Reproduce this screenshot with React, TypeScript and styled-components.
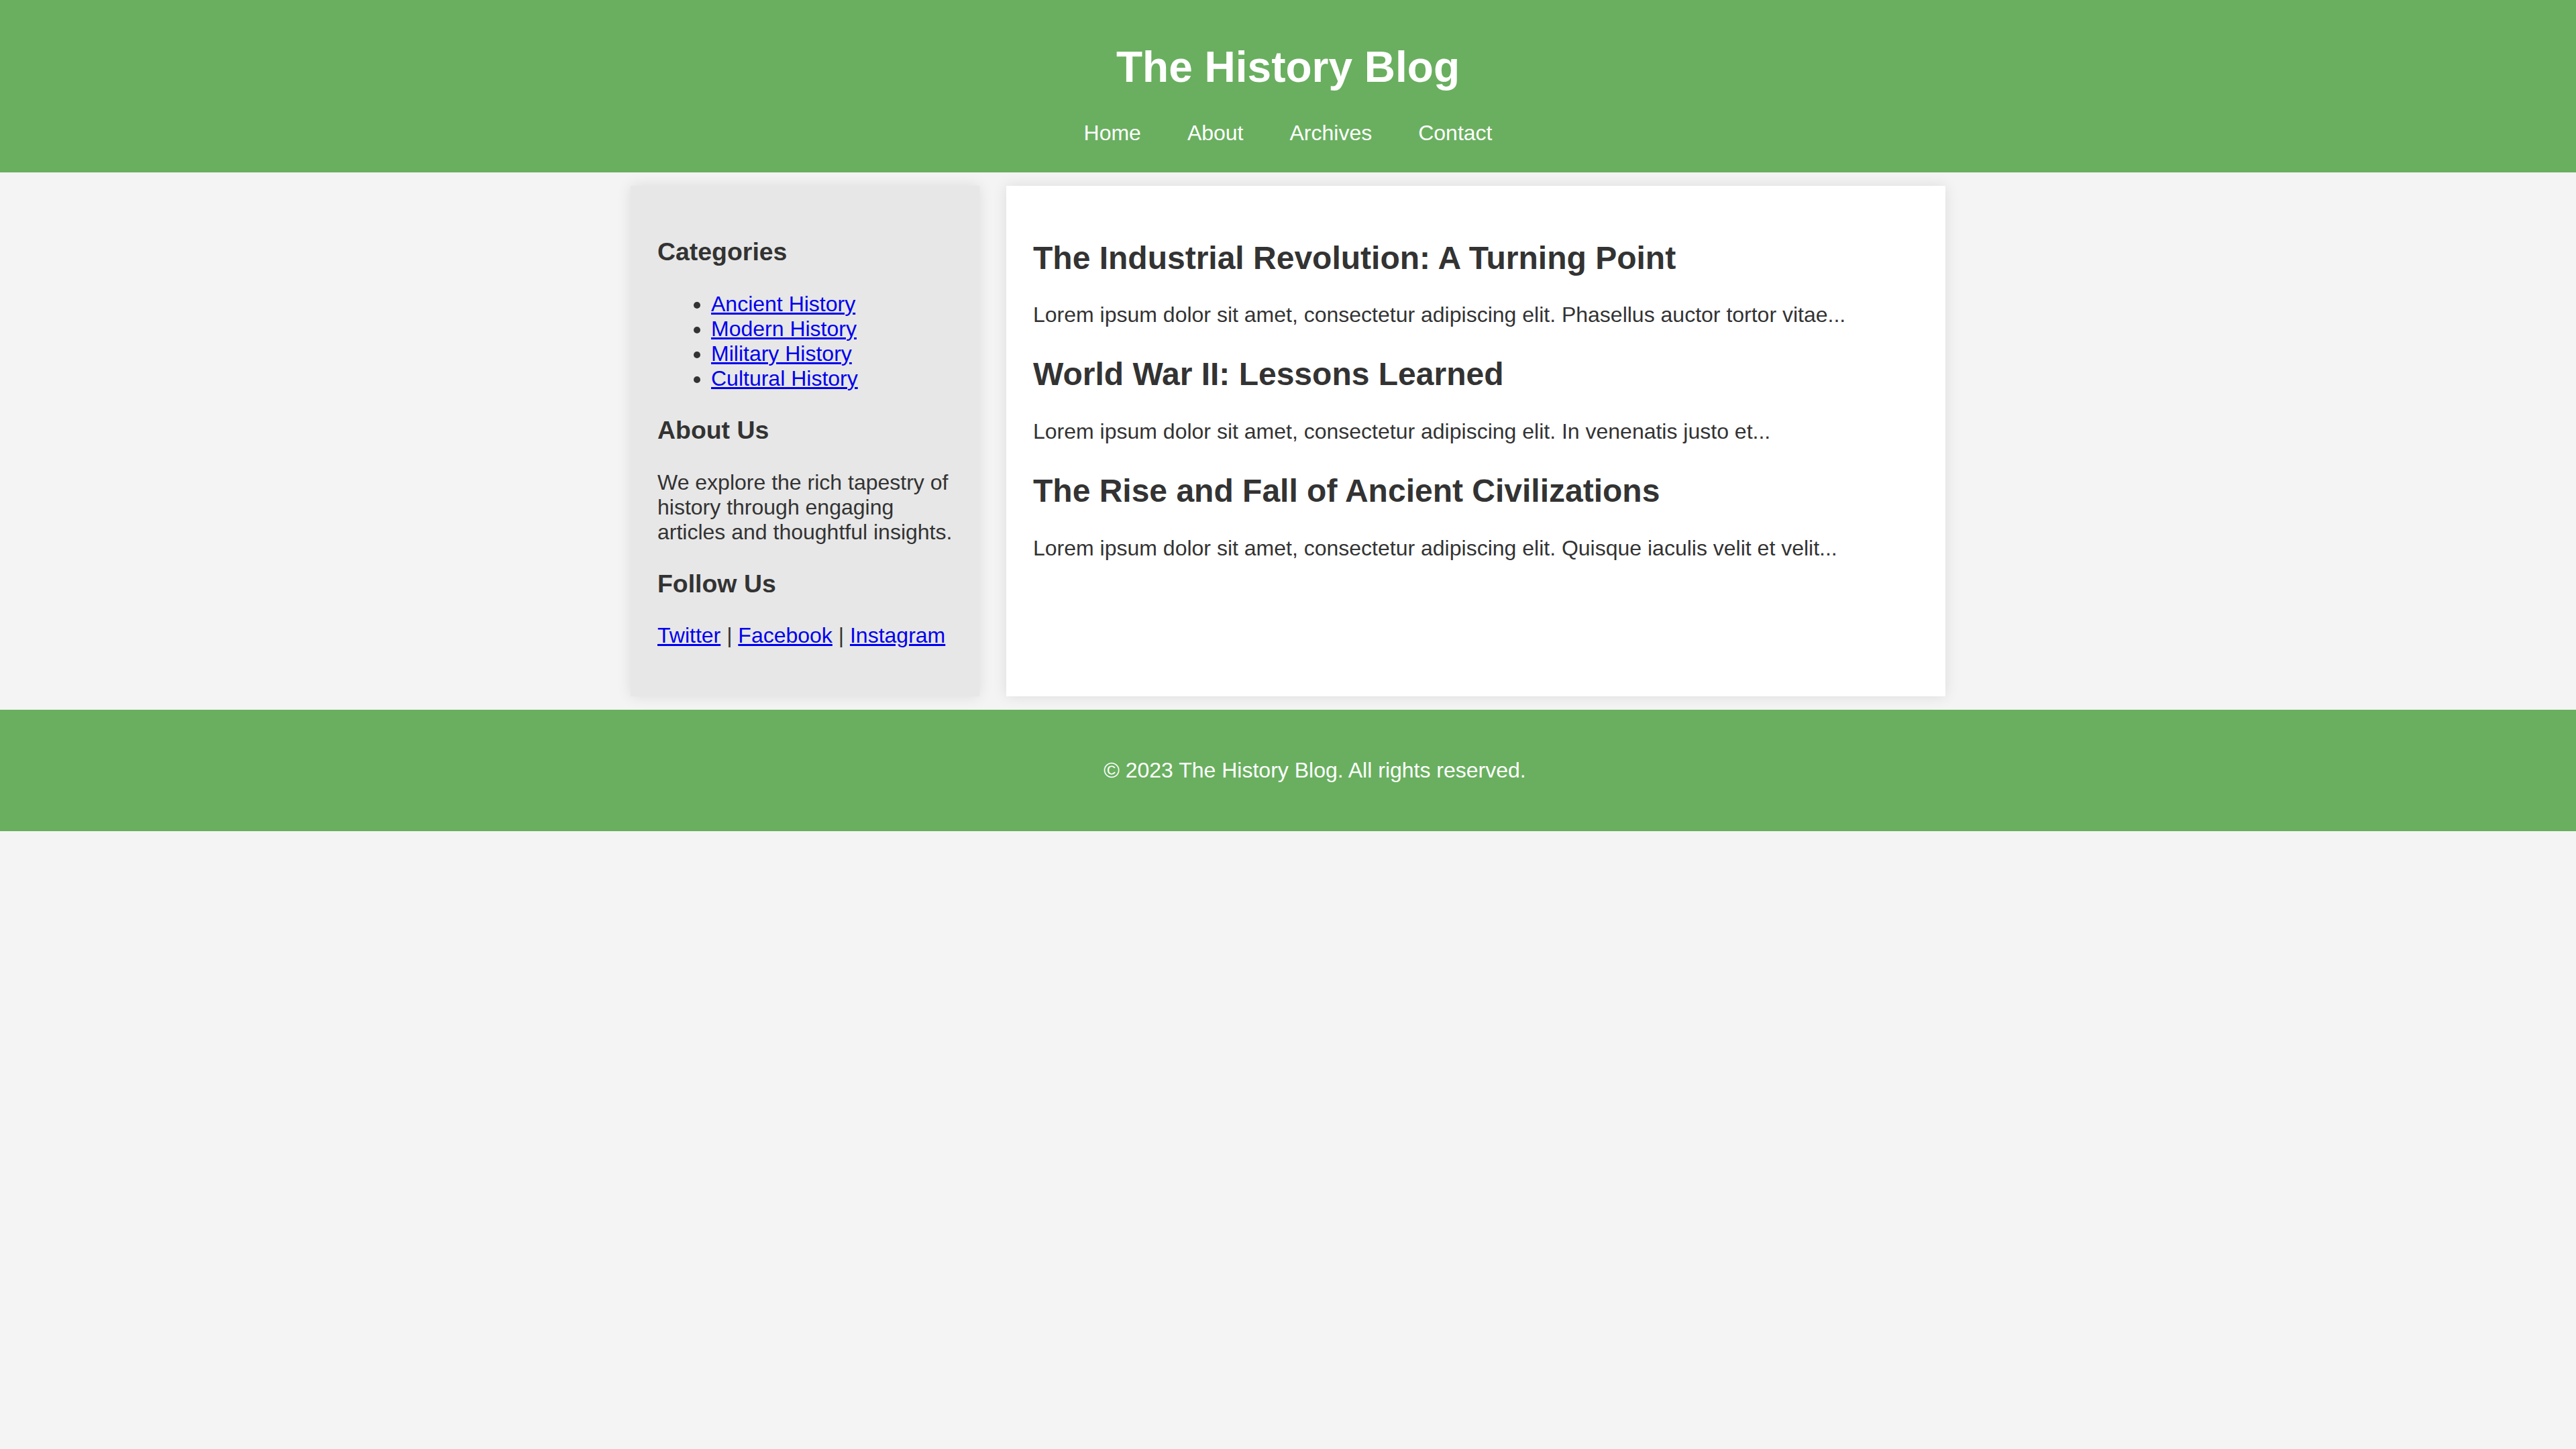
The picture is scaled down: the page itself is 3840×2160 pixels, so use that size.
import React from "react";
import styled, { createGlobalStyle } from "styled-components";

const GlobalStyle = createGlobalStyle`
  html, body {
    margin: 0;
    padding: 0;
  }
  body {
    font-family: "Liberation Sans", Arial, Helvetica, sans-serif;
    font-size: 32px;
    line-height: normal;
    background: #f4f4f4;
    color: #333333;
  }
`;

const Header = styled.header`
  background: #69af5f;
  color: #ffffff;
  text-align: center;
  padding: 20px 0;
`;

const Title = styled.h1`
  font-size: 64px;
  font-weight: bold;
  margin: 0.67em 0;
`;

const NavList = styled.ul`
  list-style: none;
  margin: 0;
  padding: 0 0 20px;
  display: flex;
  justify-content: center;
  gap: 69px;
`;

const NavLink = styled.a`
  color: #ffffff;
  text-decoration: none;
  font-size: 32px;
`;

const Container = styled.div`
  display: flex;
  align-items: stretch;
  gap: 40px;
  max-width: 1960px;
  margin: 0 auto;
  padding: 20px;
`;

const Card = styled.div<{ $tone: "grey" | "white"; $grow: number }>`
  flex: ${(p) => p.$grow} 1 0;
  min-width: 0;
  padding: 40px;
  background: ${(p) => (p.$tone === "grey" ? "#e7e7e7" : "#ffffff")};
  box-shadow: 0 0 20px rgba(0, 0, 0, 0.1);
`;

const SideHeading = styled.h3`
  font-size: 37.44px;
  font-weight: bold;
  margin: 1em 0;
`;

const Paragraph = styled.p`
  margin: 1em 0;
`;

const CategoryList = styled.ul`
  margin: 1em 0;
  padding-left: 80px;
  list-style: disc;
`;

const TextLink = styled.a`
  color: #0000ee;
  text-decoration: underline;
`;

const Article = styled.article`
  margin-bottom: 42px;
`;

const PostTitle = styled.h2`
  font-size: 48px;
  font-weight: bold;
  margin: 0.83em 0;
`;

const Footer = styled.footer`
  background: #69af5f;
  color: #ffffff;
  text-align: center;
  padding: 40px 0 40px 80px;
`;

const navItems = ["Home", "About", "Archives", "Contact"];
const categories = ["Ancient History", "Modern History", "Military History", "Cultural History"];
const posts = [
  {
    title: "The Industrial Revolution: A Turning Point",
    text: "Lorem ipsum dolor sit amet, consectetur adipiscing elit. Phasellus auctor tortor vitae...",
  },
  {
    title: "World War II: Lessons Learned",
    text: "Lorem ipsum dolor sit amet, consectetur adipiscing elit. In venenatis justo et...",
  },
  {
    title: "The Rise and Fall of Ancient Civilizations",
    text: "Lorem ipsum dolor sit amet, consectetur adipiscing elit. Quisque iaculis velit et velit...",
  },
];

export default function App() {
  return (
    <>
      <GlobalStyle />
      <Header>
        <Title>The History Blog</Title>
        <nav>
          <NavList>
            {navItems.map((n) => (
              <li key={n}>
                <NavLink href="#">{n}</NavLink>
              </li>
            ))}
          </NavList>
        </nav>
      </Header>
      <Container>
        <Card as="aside" $tone="grey" $grow={1}>
          <SideHeading>Categories</SideHeading>
          <CategoryList>
            {categories.map((c) => (
              <li key={c}>
                <TextLink href="#">{c}</TextLink>
              </li>
            ))}
          </CategoryList>
          <SideHeading>About Us</SideHeading>
          <Paragraph>
            We explore the rich tapestry of history through engaging articles and thoughtful insights.
          </Paragraph>
          <SideHeading>Follow Us</SideHeading>
          <Paragraph>
            <TextLink href="#">Twitter</TextLink> | <TextLink href="#">Facebook</TextLink> |{" "}
            <TextLink href="#">Instagram</TextLink>
          </Paragraph>
        </Card>
        <Card as="main" $tone="white" $grow={3}>
          {posts.map((p) => (
            <Article key={p.title}>
              <PostTitle>{p.title}</PostTitle>
              <Paragraph>{p.text}</Paragraph>
            </Article>
          ))}
        </Card>
      </Container>
      <Footer>
        <Paragraph>© 2023 The History Blog. All rights reserved.</Paragraph>
      </Footer>
    </>
  );
}
